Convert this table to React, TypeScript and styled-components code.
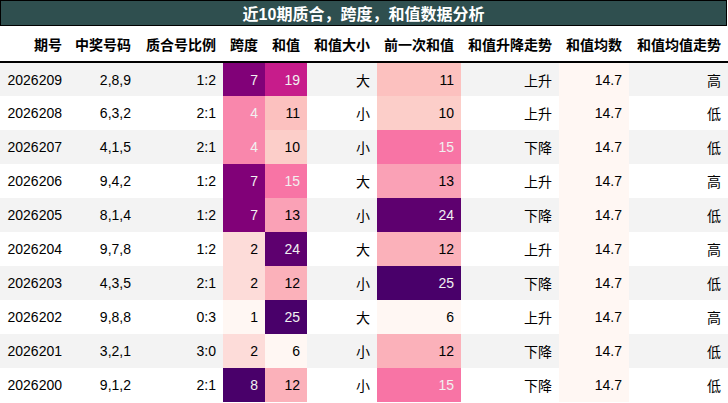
import React from "react";
import styled, { createGlobalStyle } from "styled-components";

const GlobalStyle = createGlobalStyle`
  html, body {
    margin: 0;
    padding: 0;
    background: #ffffff;
  }
  body {
    font-family: "Liberation Sans", "Noto Sans CJK SC", sans-serif;
    color: #000000;
  }
`;

const Wrapper = styled.div`
  width: 728px;
  overflow: hidden;
`;

const Title = styled.div`
  box-sizing: border-box;
  width: 727px;
  height: 26px;
  border: 1px solid #000000;
  background: #2f4f4f;
  color: #ffffff;
  font-size: 16px;
  font-weight: bold;
  display: flex;
  align-items: center;
  justify-content: center;
`;

const Table = styled.table`
  width: 728px;
  table-layout: fixed;
  border-collapse: collapse;
  font-size: 14px;
`;

const HeadRow = styled.tr`
  height: 36px;
  border-bottom: 2px solid #000000;
`;

const Th = styled.th`
  padding: 0 7px 0 0;
  text-align: right;
  font-weight: bold;
  white-space: nowrap;
`;

const Row = styled.tr`
  height: 34px;
  &:nth-child(odd) {
    background: #f3f3f3;
  }
`;

const Td = styled.td`
  padding: 0 7px 0 0;
  text-align: right;
  white-space: nowrap;
`;

const widths = [69, 69, 85, 42, 42, 70, 84, 98, 70, 99];
const headers = [
  "期号",
  "中奖号码",
  "质合号比例",
  "跨度",
  "和值",
  "和值大小",
  "前一次和值",
  "和值升降走势",
  "和值均数",
  "和值均值走势",
];

type RowData = [string, string, string, number, number, string, number, string, number, string];

const rows: RowData[] = [
  ["2026209", "2,8,9", "1:2", 7, 19, "大", 11, "上升", 14.7, "高"],
  ["2026208", "6,3,2", "2:1", 4, 11, "小", 10, "上升", 14.7, "低"],
  ["2026207", "4,1,5", "2:1", 4, 10, "小", 15, "下降", 14.7, "低"],
  ["2026206", "9,4,2", "1:2", 7, 15, "大", 13, "上升", 14.7, "高"],
  ["2026205", "8,1,4", "1:2", 7, 13, "小", 24, "下降", 14.7, "低"],
  ["2026204", "9,7,8", "1:2", 2, 24, "大", 12, "上升", 14.7, "高"],
  ["2026203", "4,3,5", "2:1", 2, 12, "小", 25, "下降", 14.7, "低"],
  ["2026202", "9,8,8", "0:3", 1, 25, "大", 6, "上升", 14.7, "高"],
  ["2026201", "3,2,1", "3:0", 2, 6, "小", 12, "下降", 14.7, "低"],
  ["2026200", "9,1,2", "2:1", 8, 12, "小", 15, "下降", 14.7, "低"],
];

const RDPU = [
  "#fff7f3",
  "#fde0dd",
  "#fcc5c0",
  "#fa9fb5",
  "#f768a1",
  "#dd3497",
  "#ae017e",
  "#7a0177",
  "#49006a",
].map((h) => [
  parseInt(h.slice(1, 3), 16),
  parseInt(h.slice(3, 5), 16),
  parseInt(h.slice(5, 7), 16),
]);

function rdpu(t: number): [number, number, number] {
  const x = Math.max(0, Math.min(1, t)) * 8;
  const i = Math.min(7, Math.floor(x));
  const f = x - i;
  const a = RDPU[i];
  const b = RDPU[i + 1];
  return [0, 1, 2].map((k) => Math.round(a[k] + (b[k] - a[k]) * f)) as [number, number, number];
}

function lum([r, g, b]: [number, number, number]) {
  const c = (v: number) => {
    const s = v / 255;
    return s <= 0.03928 ? s / 12.92 : Math.pow((s + 0.055) / 1.055, 2.4);
  };
  return 0.2126 * c(r) + 0.7152 * c(g) + 0.0722 * c(b);
}

const gradientCols = [3, 4, 6, 8];
const ranges: Record<number, [number, number]> = {};
gradientCols.forEach((c) => {
  const vals = rows.map((r) => r[c] as number);
  ranges[c] = [Math.min(...vals), Math.max(...vals)];
});
ranges[4] = [6, 25];
ranges[6] = [6, 25];

function cellStyle(col: number, v: number): React.CSSProperties | undefined {
  if (!gradientCols.includes(col)) return undefined;
  const [lo, hi] = ranges[col];
  const t = hi === lo ? 0 : (v - lo) / (hi - lo);
  const rgb = rdpu(t);
  return {
    background: `rgb(${rgb[0]}, ${rgb[1]}, ${rgb[2]})`,
    color: lum(rgb) < 0.408 ? "#f1f1f1" : "#000000",
  };
}

export default function App() {
  return (
    <Wrapper>
      <GlobalStyle />
      <Title>近10期质合，跨度，和值数据分析</Title>
      <Table>
        <colgroup>
          {widths.map((w, i) => (
            <col key={i} style={{ width: w }} />
          ))}
        </colgroup>
        <thead>
          <HeadRow>
            {headers.map((h) => (
              <Th key={h}>{h}</Th>
            ))}
          </HeadRow>
        </thead>
        <tbody>
          {rows.map((r) => (
            <Row key={r[0]}>
              {r.map((v, ci) => (
                <Td key={ci} style={cellStyle(ci, v as number)}>
                  {typeof v === "number" && ci === 8 ? v.toFixed(1) : v}
                </Td>
              ))}
            </Row>
          ))}
        </tbody>
      </Table>
    </Wrapper>
  );
}
